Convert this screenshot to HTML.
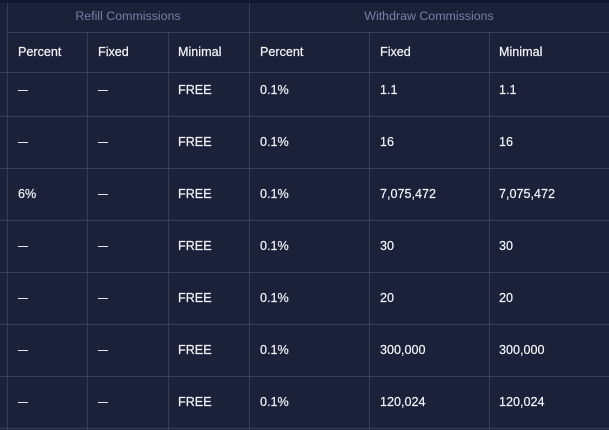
<!DOCTYPE html>
<html><head><meta charset="utf-8"><style>
html,body{margin:0;padding:0;}
body{width:609px;height:430px;background:#1a2139;position:relative;overflow:hidden;font-family:"Liberation Sans",sans-serif;}
.top{position:absolute;left:0;top:0;width:609px;height:3px;background:#121830;}
.v{position:absolute;width:1px;background:#363e5e;}
.h{position:absolute;height:1px;background:#363e5e;}
.t{position:absolute;font-size:12.6px;color:#f4f6fa;line-height:14px;white-space:nowrap;-webkit-text-stroke:0.2px #f4f6fa;}
.g{position:absolute;font-size:12.4px;color:#7581a8;line-height:14px;text-align:center;}
.d{position:absolute;width:10px;height:1px;background:#e0e3ea;}
</style></head><body>
<div class="top"></div>
<div class="v" style="left:7px;top:3px;height:427px"></div>
<div class="v" style="left:249px;top:3px;height:427px"></div>
<div class="v" style="left:87px;top:32px;height:398px"></div>
<div class="v" style="left:168px;top:32px;height:398px"></div>
<div class="v" style="left:369px;top:32px;height:398px"></div>
<div class="v" style="left:489px;top:32px;height:398px"></div>
<div class="h" style="left:7px;top:32px;width:602px"></div>
<div class="h" style="left:0;top:72px;width:609px"></div>
<div class="h" style="left:0;top:116px;width:609px"></div>
<div class="h" style="left:0;top:168px;width:609px"></div>
<div class="h" style="left:0;top:220px;width:609px"></div>
<div class="h" style="left:0;top:272px;width:609px"></div>
<div class="h" style="left:0;top:324px;width:609px"></div>
<div class="h" style="left:0;top:376px;width:609px"></div>
<div class="h" style="left:0;top:428px;width:609px"></div>
<div class="g" style="left:7px;width:242px;top:9px">Refill Commissions</div>
<div class="g" style="left:249px;width:360px;top:9px">Withdraw Commissions</div>
<div class="t" style="left:18px;top:45px">Percent</div>
<div class="t" style="left:98px;top:45px">Fixed</div>
<div class="t" style="left:178px;top:45px">Minimal</div>
<div class="t" style="left:260px;top:45px">Percent</div>
<div class="t" style="left:380px;top:45px">Fixed</div>
<div class="t" style="left:499px;top:45px">Minimal</div>

<div class="d" style="left:18px;top:90px"></div><div class="d" style="left:98px;top:90px"></div>
<div class="t" style="left:178px;top:83px">FREE</div><div class="t" style="left:260px;top:83px">0.1%</div>
<div class="t" style="left:380px;top:83px">1.1</div><div class="t" style="left:499px;top:83px">1.1</div>

<div class="d" style="left:18px;top:142px"></div><div class="d" style="left:98px;top:142px"></div>
<div class="t" style="left:178px;top:135px">FREE</div><div class="t" style="left:260px;top:135px">0.1%</div>
<div class="t" style="left:380px;top:135px">16</div><div class="t" style="left:499px;top:135px">16</div>

<div class="t" style="left:18px;top:187px">6%</div><div class="d" style="left:98px;top:194px"></div>
<div class="t" style="left:178px;top:187px">FREE</div><div class="t" style="left:260px;top:187px">0.1%</div>
<div class="t" style="left:380px;top:187px">7,075,472</div><div class="t" style="left:499px;top:187px">7,075,472</div>

<div class="d" style="left:18px;top:246px"></div><div class="d" style="left:98px;top:246px"></div>
<div class="t" style="left:178px;top:239px">FREE</div><div class="t" style="left:260px;top:239px">0.1%</div>
<div class="t" style="left:380px;top:239px">30</div><div class="t" style="left:499px;top:239px">30</div>

<div class="d" style="left:18px;top:298px"></div><div class="d" style="left:98px;top:298px"></div>
<div class="t" style="left:178px;top:291px">FREE</div><div class="t" style="left:260px;top:291px">0.1%</div>
<div class="t" style="left:380px;top:291px">20</div><div class="t" style="left:499px;top:291px">20</div>

<div class="d" style="left:18px;top:350px"></div><div class="d" style="left:98px;top:350px"></div>
<div class="t" style="left:178px;top:343px">FREE</div><div class="t" style="left:260px;top:343px">0.1%</div>
<div class="t" style="left:380px;top:343px">300,000</div><div class="t" style="left:499px;top:343px">300,000</div>

<div class="d" style="left:18px;top:402px"></div><div class="d" style="left:98px;top:402px"></div>
<div class="t" style="left:178px;top:395px">FREE</div><div class="t" style="left:260px;top:395px">0.1%</div>
<div class="t" style="left:380px;top:395px">120,024</div><div class="t" style="left:499px;top:395px">120,024</div>
</body></html>
